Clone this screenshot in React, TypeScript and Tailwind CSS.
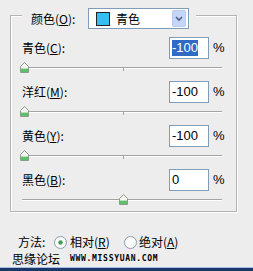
const cjk = "font-['Noto_Sans_CJK_SC','Noto_Sans',sans-serif]";

type Row = { label: string; key: string; value: string; pos: number; selected?: boolean };

const rows: Row[] = [
  { label: "青色", key: "C", value: "-100", pos: 0, selected: true },
  { label: "洋红", key: "M", value: "-100", pos: 0 },
  { label: "黄色", key: "Y", value: "-100", pos: 0 },
  { label: "黑色", key: "B", value: "0", pos: 50 },
];

const Thumb = () => (
  <svg width="9" height="11" viewBox="0 0 9 11">
    <path d="M0.5 4.5 L4.5 0.5 L8.5 4.5 L8.5 10.5 L0.5 10.5 Z" fill="#f4f4f0" stroke="#8c9a8c" />
    <rect x="1" y="7" width="7" height="3" fill="#5fbf6a" />
    <path d="M1 6.5 H8" stroke="#b9e0bb" />
  </svg>
);

const Slider = ({ pos }: { pos: number }) => (
  <div className="relative h-[22px] w-[200px]">
    <div className="absolute left-0 top-[8px] h-px w-[200px] bg-[#a3a3a3]" />
    <div className="absolute left-0 top-[9px] h-px w-[200px] bg-white" />
    <div className="absolute left-[101px] top-[8px] h-[4px] w-px bg-[#a3a3a3]" />
    <div className="absolute top-[3px]" style={{ left: `${-2 + pos * 1.98}px` }}>
      <Thumb />
    </div>
  </div>
);

const SliderRow = ({ row }: { row: Row }) => (
  <div className="flex flex-col">
    <div className="flex h-[22px] items-center">
      <span className={`w-[147px] text-[12px] text-black ${cjk}`}>
        {row.label}(<span className="underline">{row.key}</span>):
      </span>
      <div className="flex h-[22px] w-[40px] items-center border border-[#7f9db9] bg-white pl-[2px]">
        <span
          className={`font-['Liberation_Sans',sans-serif] text-[13px] leading-[16px] ${
            row.selected ? "bg-[#316ac5] text-white" : "text-black"
          }`}
        >
          {row.value}
        </span>
      </div>
      <span className="ml-[4px] font-['Liberation_Sans',sans-serif] text-[13px] text-black">%</span>
    </div>
    <Slider pos={row.pos} />
  </div>
);

const Radio = ({ checked }: { checked?: boolean }) => (
  <svg width="13" height="13" viewBox="0 0 13 13">
    <circle cx="6.5" cy="6.5" r="6" fill="#fcfcfc" stroke="#8a9aaa" />
    {checked ? <circle cx="6.5" cy="6.5" r="2.2" fill="#3f9f4a" /> : null}
  </svg>
);

export default function App() {
  return (
    <div className={`relative flex h-[271px] w-[253px] flex-col overflow-hidden bg-[#ededed] ${cjk}`}>
      <div className="relative ml-[10px] mt-[15px] h-[197px] w-[227px] border border-[#b3b3b3] shadow-[inset_1px_1px_0_#fff,1px_1px_0_#fff]">
        <div className="absolute left-[11px] top-[-8px] flex h-[21px] items-center bg-[#ededed] pl-[9px] pr-[7px]">
          <span className="w-[57px] text-[12px] text-black">
            颜色(<span className="underline">O</span>):
          </span>
          <div className="flex h-[21px] w-[101px] items-center border border-[#7f9db9] bg-white pl-[7px] pr-[2px]">
            <div className="h-[14px] w-[14px] border border-[#222] bg-[#35bff0]" />
            <span className="ml-[6px] text-[12px] text-black">青色</span>
            <div className="ml-auto flex h-[17px] w-[14px] items-center justify-center rounded-[2px] border border-[#b9c9ef] bg-[#c5d5f7]">
              <svg width="8" height="6" viewBox="0 0 8 6">
                <path d="M1 1 L4 4 L7 1" fill="none" stroke="#4d6185" strokeWidth="1.6" />
              </svg>
            </div>
          </div>
        </div>
        <div className="flex flex-col pl-[11px] pt-[21px]">
          {rows.map((r) => (
            <SliderRow key={r.key} row={r} />
          ))}
        </div>
      </div>
      <div className="ml-[18px] mt-[23px] flex h-[14px] items-center text-[12px] text-black">
        <span className="w-[36px]">方法:</span>
        <span className="flex items-center">
          <Radio checked />
        </span>
        <span className="ml-[3px] w-[54px]">
          相对(<span className="underline">R</span>)
        </span>
        <span className="flex items-center">
          <Radio />
        </span>
        <span className="ml-[2px]">
          绝对(<span className="underline">A</span>)
        </span>
      </div>
      <div className="ml-[12px] mt-[2px] flex h-[16px] items-center">
        <span className="text-[12px] text-black">思缘论坛</span>
        <span className="ml-[10px] font-['DejaVu_Sans_Mono',monospace] text-[8px] font-bold uppercase tracking-[0.7px] text-black">
          www.missyuan.com
        </span>
      </div>
      <div className="mt-auto h-px bg-[#a9bede]" />
      <div className="h-[3px] bg-[#18386c]" />
    </div>
  );
}
